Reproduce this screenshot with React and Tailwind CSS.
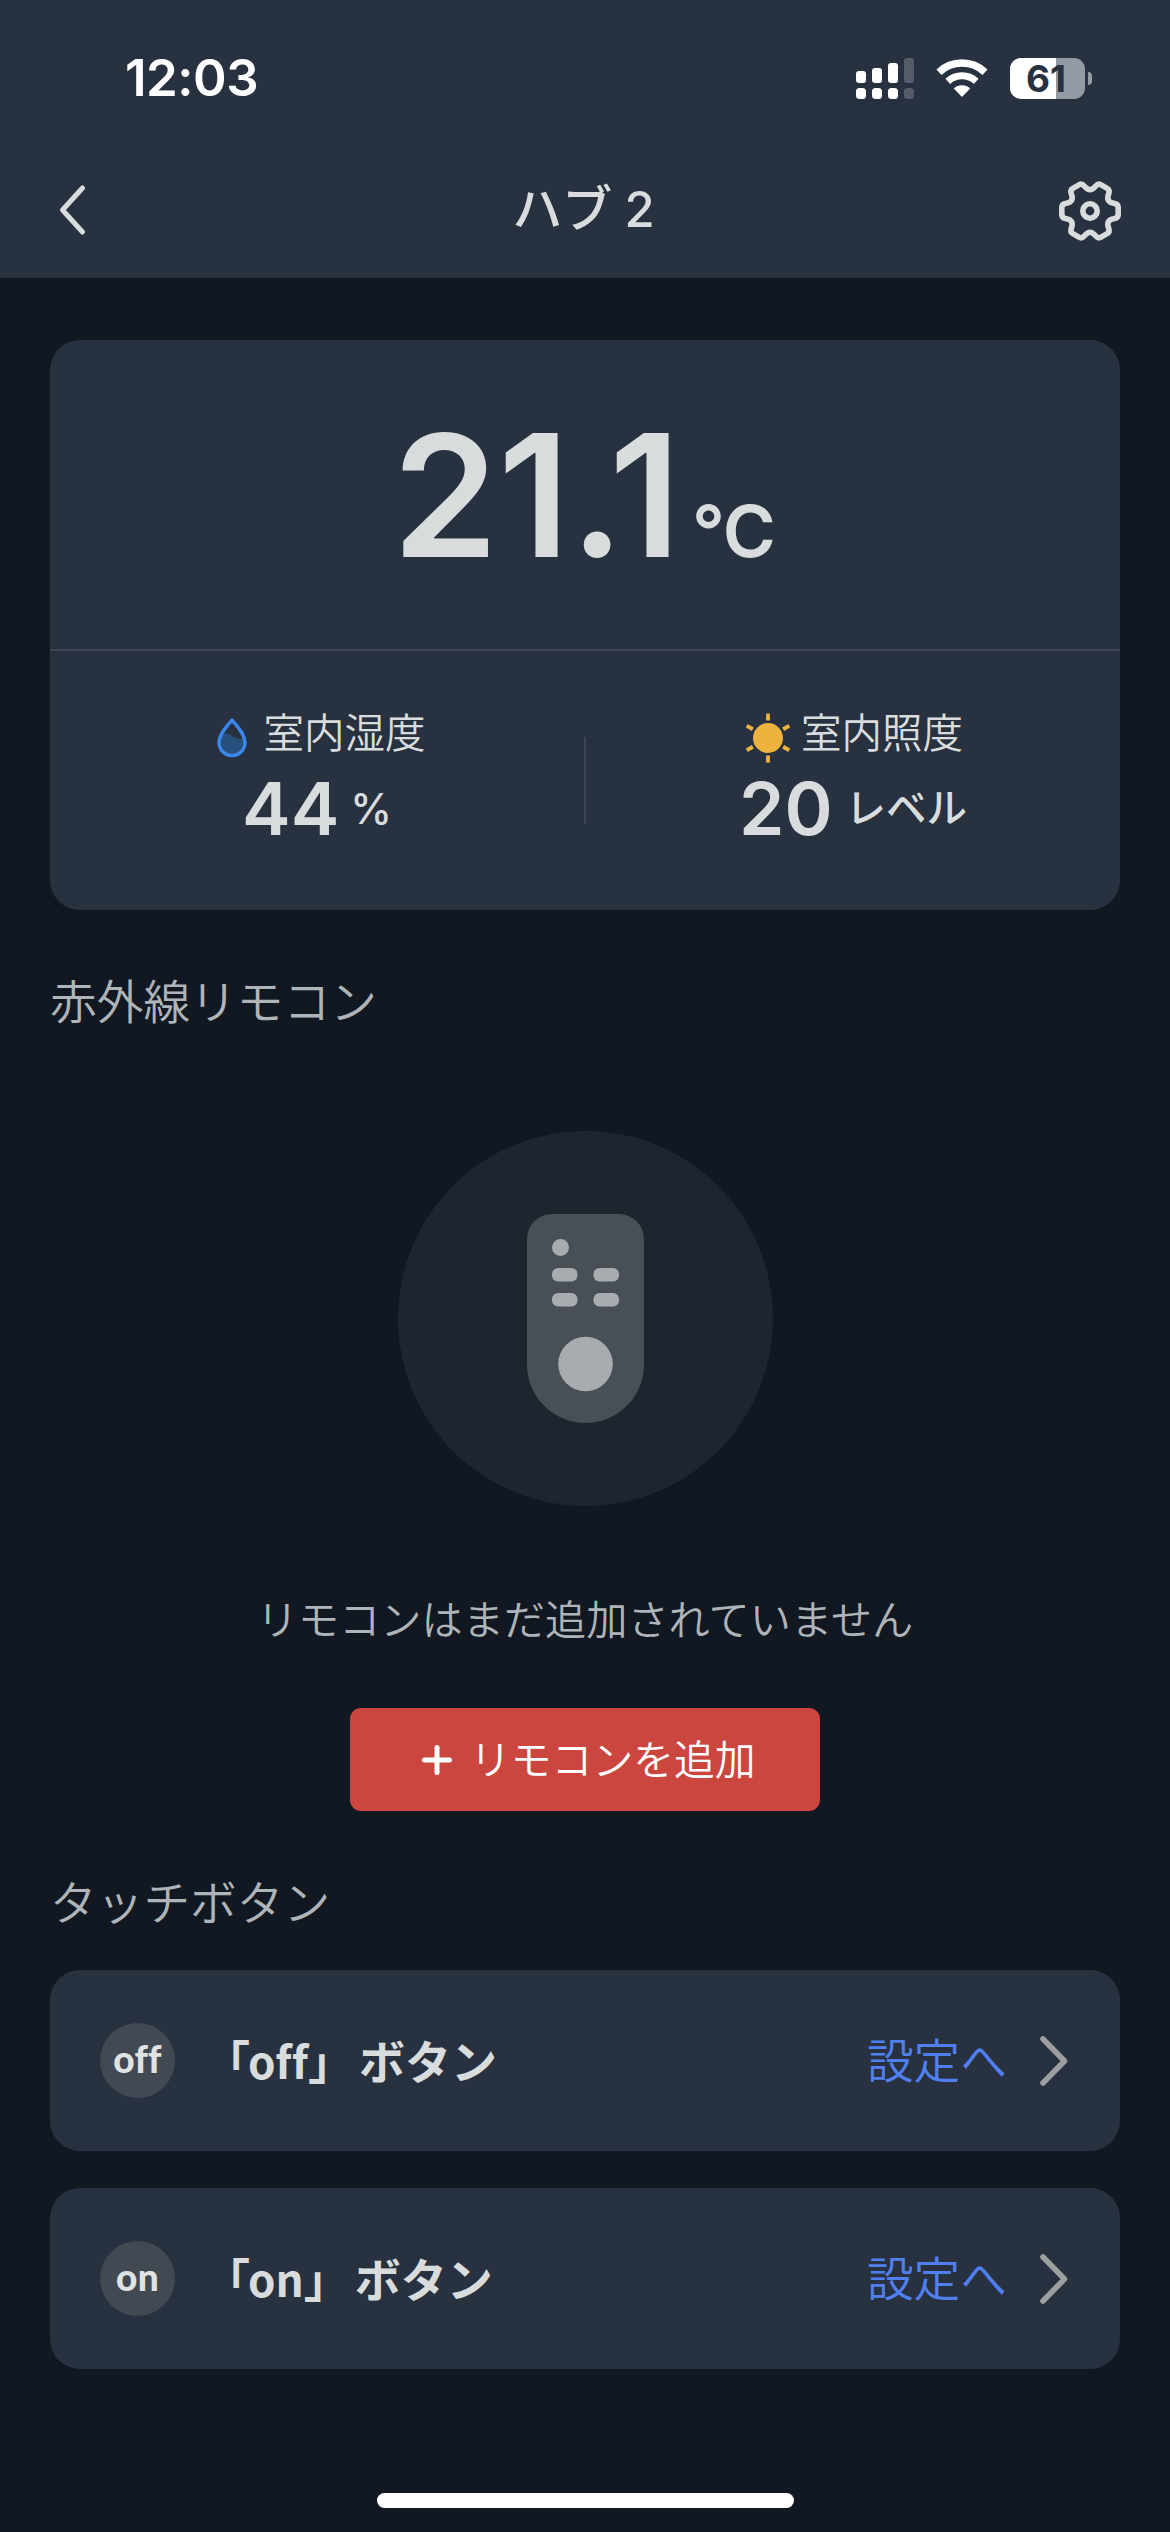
import React from "react";

const sans = "font-['Inter','Noto_Sans_CJK_JP',sans-serif]";
const jp = "font-['Noto_Sans_CJK_JP',sans-serif]";

function gearPath() {
  const rot = (x, y, deg) => {
    const a = (deg * Math.PI) / 180;
    return `${(x * Math.cos(a) - y * Math.sin(a)).toFixed(2)} ${(x * Math.sin(a) + y * Math.cos(a)).toFixed(2)}`;
  };
  let d = `M${rot(24.5, 7.5, 0)}`;
  for (let k = 0; k < 6; k++) {
    const t = -60 * k;
    d += `Q${rot(28.2, 6.8, t)} ${rot(28.2, 3.5, t)}L${rot(28.2, -3.5, t)}Q${rot(28.2, -6.8, t)} ${rot(24.5, -7.5, t)}`;
    d += `C${rot(18.2, -8.5, t)} ${rot(18.2, 8.5, t - 60)} ${rot(24.5, 7.5, t - 60)}`;
  }
  return d + "Z";
}

function Signal() {
  const bars = [
    [0, 13, 12],
    [16, 10, 15],
    [32, 5, 20],
    [48, 0, 25],
  ];
  return (
    <svg width="58" height="41" viewBox="0 0 58 41">
      {bars.map(([x, y, h], i) => (
        <g key={x} fill={i === 3 ? "#545c68" : "#fff"}>
          <rect x={x} y={y} width="10" height={h} rx="3" />
          <rect x={x} y="30" width="10" height="11" rx="3.5" />
        </g>
      ))}
    </svg>
  );
}

function Wifi() {
  return (
    <svg width="52" height="38" viewBox="0 0 52 38" fill="none" stroke="#fff">
      <path d="M3 13.2A33.5 33.5 0 0 1 49 13.2" strokeWidth="7.4" />
      <path d="M11.8 22.3A21 21 0 0 1 40.2 22.3" strokeWidth="7" />
      <path d="M26 38L17.8 29.6A11.8 11.8 0 0 1 34.2 29.6Z" fill="#fff" stroke="none" />
    </svg>
  );
}

function Battery() {
  return (
    <div className="flex items-center gap-[3px]">
      <div className="flex h-[41px] w-[75px] items-center justify-center rounded-[11px] bg-[linear-gradient(90deg,#fff_0_46px,#939aa3_46px)]">
        <span className={`${sans} pr-[3px] text-[37px] leading-none font-bold text-[#28313f]`}>61</span>
      </div>
      <div className="h-[13px] w-1 rounded-r-full bg-[#939aa3]" />
    </div>
  );
}

function Chevron() {
  return (
    <svg width="30" height="52" viewBox="0 0 30 52" fill="none" stroke="#9c9ea0" strokeWidth="5.6" strokeLinecap="round" strokeLinejoin="round">
      <path d="M4 4L25.5 26L4 48" />
    </svg>
  );
}

function TouchRow({ name }) {
  return (
    <div className="flex h-[181px] items-center rounded-[30px] bg-[#28313f] pr-[51px] pl-[50px]">
      <div className="flex size-[75px] items-center justify-center rounded-full bg-[#424952]">
        <span className="pb-[5px] font-['Lato',sans-serif] text-[37px] leading-none font-black tracking-[0.3px] text-[#e0e3e3] [font-variant-ligatures:none]">{name}</span>
      </div>
      <span className={`${jp} ml-[29px] pb-[4px] text-[46px] leading-none font-bold text-[#d9dcdc] [font-variant-ligatures:none]`}>
        「<span className="-ml-[2px] text-[44px]">{name}</span>」<span className="ml-[5px]">ボタン</span>
      </span>
      <span className={`${jp} mr-[32px] ml-auto pb-[4px] text-[46.7px] leading-none font-[350] text-[#5080ef]`}>設定へ</span>
      <Chevron />
    </div>
  );
}

export default function App() {
  return (
    <div className={`${sans} flex h-[2532px] w-[1170px] flex-col bg-[#111822] text-[#d9dcdc]`}>
      <header className="h-[278px] bg-[#28313f]">
        <div className="flex h-[156px] items-center justify-between pr-[78px] pl-[125px]">
          <span className="pb-[1px] text-[51px] leading-none font-semibold tracking-[-0.5px] text-white">12:03</span>
          <div className="flex items-center">
            <Signal />
            <div className="mr-[22px] ml-[22px]"><Wifi /></div>
            <Battery />
          </div>
        </div>
        <div className="grid h-[108px] grid-cols-3 items-center px-[47px]">
          <svg className="ml-[11px]" width="30" height="54" viewBox="0 0 30 54" fill="none" stroke="#d9dcdc" strokeWidth="5" strokeLinecap="round" strokeLinejoin="round">
            <path d="M24.5 5L4.5 27L24.5 49" />
          </svg>
          <h1 className="pr-[4px] pb-[2px] text-center text-[50px] leading-none font-medium whitespace-pre">ハブ<span className="text-[49px] tracking-[-1px]"> 2</span></h1>
          <svg className="mt-[2px] ml-auto" width="66" height="66" viewBox="-33 -33 66 66" fill="none" stroke="#d9dcdc" strokeWidth="5.6">
            <path d={gearPath()} />
            <circle r="7.2" />
          </svg>
        </div>
      </header>

      <main className="flex flex-col px-[50px] pt-[62px]">
        <section className="flex h-[570px] flex-col rounded-[30px] bg-[#28313f]">
          <div className="flex h-[309px] items-baseline justify-center pt-[70px] pr-[3px]">
            <span className="text-[170px] leading-none font-semibold">21.1</span>
            <span className="ml-[11px] text-[72px] leading-none font-semibold tracking-[-1px]">°C</span>
          </div>
          <div className="h-[2px] bg-[#3c4550]" />
          <div className="flex flex-1 items-start">
            <div className="flex flex-1 flex-col items-center pt-[54px]">
              <div className="flex h-[50px] items-center pl-[7px]">
                <svg className="mt-[15px] mr-[16px]" width="32" height="41" viewBox="0 0 32 41">
                  <path d="M4 20Q8 15 13 17Q18 22 28 22Q29.500 37 16 37.500Q3 37 4 20Z" fill="#28507c" />
                  <path d="M16 3C11 9.500 3 17 3 25.500A13 13 0 0 0 29 25.500C29 17 21 9.500 16 3Z" fill="none" stroke="#3a86ee" strokeWidth="3.400" strokeLinejoin="round" />
                </svg>
                <span className={`${jp} pt-[3px] text-[40.5px] leading-none font-[350]`}>室内湿度</span>
              </div>
              <div className="mt-[17px] flex items-center">
                <span className="text-[73px] leading-none font-semibold">44</span>
                <span className="ml-[11px] text-[42px] leading-none font-medium">%</span>
              </div>
            </div>
            <div className="mt-[86px] h-[87px] w-[2px] bg-[#3c4550]" />
            <div className="flex flex-1 flex-col items-center pt-[54px]">
              <div className="flex h-[50px] items-center">
                <svg className="mt-[16px] mr-[8px]" width="50" height="50" viewBox="-25 -25 50 50" stroke="#edb33f" strokeWidth="3.800">
                  <circle r="15" fill="#edb33f" stroke="none" />
                  {[0, 60, 120, 180, 240, 300].map((a) => (
                    <path key={a} d="M0 -17.500V-24.500" transform={`rotate(${a})`} />
                  ))}
                </svg>
                <span className={`${jp} pt-[3px] text-[40.5px] leading-none font-[350]`}>室内照度</span>
              </div>
              <div className="mt-[17px] flex items-center">
                <span className="text-[73px] leading-none font-semibold">20</span>
                <span className={`${jp} ml-[13px] pb-[5px] text-[40.5px] leading-none font-medium`}>レベル</span>
              </div>
            </div>
          </div>
        </section>

        <h2 className={`${jp} mt-[66px] h-[47px] text-[46.7px] leading-none font-[350] text-[#aeb4b7]`}>赤外線リモコン</h2>

        <section className="mt-[108px] flex flex-col items-center">
          <svg width="375" height="375" viewBox="0 0 375 375">
            <circle cx="187.500" cy="187.500" r="187.500" fill="#1e252f" />
            <path d="M154 83H221A25 25 0 0 1 246 108V233.500A58.500 58.500 0 0 1 129 233.500V108A25 25 0 0 1 154 83Z" fill="#485056" />
            <g fill="#a8acb0">
              <circle cx="162.500" cy="116.500" r="8.500" />
              <rect x="154" y="137" width="25.500" height="13.500" rx="6" />
              <rect x="195.500" y="137" width="25.500" height="13.500" rx="6" />
              <rect x="154" y="162" width="25.500" height="13.500" rx="6" />
              <rect x="195.500" y="162" width="25.500" height="13.500" rx="6" />
              <circle cx="187.500" cy="233" r="27.300" />
            </g>
          </svg>
          <p className={`${jp} mt-[91px] h-[41px] text-[41.2px] leading-none font-[350] text-[#aeb4b7]`}>リモコンはまだ追加されていません</p>
          <button className={`${jp} mt-[70px] flex h-[103px] w-[470px] items-center rounded-[11px] bg-[#cc4640] pl-[71px] text-[40.8px] leading-none font-[350] text-white`}>
            <svg className="mr-[17px]" width="32" height="32" viewBox="0 0 32 32" stroke="#fff" strokeWidth="5" strokeLinecap="round">
              <path d="M3.500 16H28.500M16 3.500V28.500" />
            </svg>
            <span className="pb-[2px]">リモコンを追加</span>
          </button>
        </section>

        <h2 className={`${jp} mt-[66px] h-[47px] text-[46.7px] leading-none font-[350] text-[#aeb4b7]`}>タッチボタン</h2>
        <div className="mt-[46px] flex flex-col gap-[37px]">
          <TouchRow name="off" />
          <TouchRow name="on" />
        </div>
      </main>

      <div className="mx-auto mt-auto mb-[24px] h-[15px] w-[417px] rounded-full bg-white" />
    </div>
  );
}
